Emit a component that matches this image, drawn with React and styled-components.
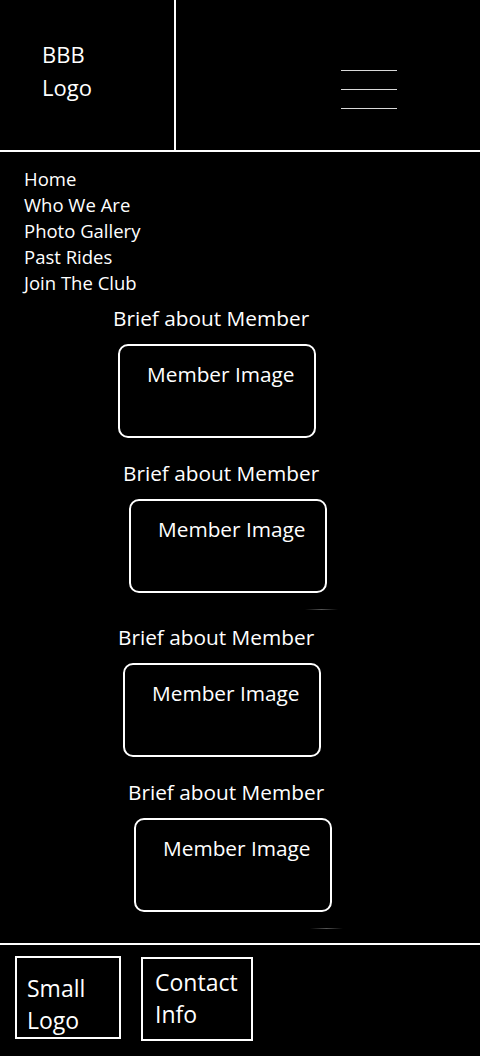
import React from 'react'
import styled, { createGlobalStyle } from 'styled-components'

const GlobalStyle = createGlobalStyle`
  html, body {
    margin: 0;
    padding: 0;
    background: #000;
  }
  body {
    color: #fff;
    font-family: "Open Sans", Lato, "Liberation Sans", sans-serif;
  }
`

const Page = styled.div`
  width: 480px;
  min-height: 1056px;
  background: #000;
  display: flex;
  flex-direction: column;
`

const Header = styled.header`
  display: flex;
  height: 150px;
  border-bottom: 2px solid #fff;
`

const LogoCell = styled.div`
  width: 176px;
  border-right: 2px solid #fff;
  padding: 38px 0 0 42px;
  box-sizing: border-box;
  font-size: 22px;
  line-height: 33px;
`

const MenuCell = styled.div`
  flex: 1;
  display: flex;
  justify-content: flex-end;
  padding: 70px 83px 0 0;
`

const Burger = styled.div`
  display: flex;
  flex-direction: column;
  gap: 18px;
`

const BurgerLine = styled.span`
  display: block;
  width: 56px;
  height: 1px;
  background: #d8d8d8;
`

const Nav = styled.nav`
  display: flex;
  flex-direction: column;
  padding: 14px 0 0 24px;
  font-size: 18.5px;
  line-height: 26px;
`

const NavLink = styled.a`
  color: #fff;
  text-decoration: none;
`

const Members = styled.section`
  display: flex;
  flex-direction: column;
  padding-top: 9px;
`

const Member = styled.div`
  display: flex;
  flex-direction: column;
  margin-left: ${(p) => p.$offset}px;
  margin-top: ${(p) => p.$top}px;
`

const Brief = styled.div`
  font-size: 20.8px;
  line-height: 26px;
`

const ImageBox = styled.div`
  position: relative;
  box-sizing: border-box;
  width: 198px;
  height: 94px;
  margin: 13px 0 0 ${(p) => p.$shift}px;
  border: 2px solid #fff;
  border-radius: 10px;
  padding: 15px 0 0 27px;
  font-size: 20.8px;
  line-height: 26px;

  ${(p) =>
    p.$trail &&
    `
    &::after {
      content: '';
      position: absolute;
      right: -13px;
      bottom: -19px;
      width: 33px;
      height: 1px;
      background: linear-gradient(90deg, #000, #555 50%, #000);
    }
  `}
`

const Footer = styled.footer`
  margin-top: 31px;
  border-top: 2px solid #fff;
  display: flex;
  align-items: flex-start;
  gap: 20px;
  padding: 11px 0 0 15px;
`

const FooterBox = styled.div`
  box-sizing: border-box;
  width: ${(p) => p.$w}px;
  height: ${(p) => p.$h}px;
  margin-top: ${(p) => p.$top || 0}px;
  border: 2px solid #fff;
  padding: ${(p) => p.$pad};
  font-size: 23px;
  line-height: 32px;
`

const members = [
  { offset: 113, top: 0, shift: 5 },
  { offset: 123, top: 22, shift: 6, trail: true },
  { offset: 118, top: 31, shift: 5 },
  { offset: 128, top: 22, shift: 6, trail: true },
]

const navItems = ['Home', 'Who We Are', 'Photo Gallery', 'Past Rides', 'Join The Club']

const App = () => {
  return (
    <Page>
      <GlobalStyle />
      <Header>
        <LogoCell>
          BBB
          <br />
          Logo
        </LogoCell>
        <MenuCell>
          <Burger>
            <BurgerLine />
            <BurgerLine />
            <BurgerLine />
          </Burger>
        </MenuCell>
      </Header>
      <Nav>
        {navItems.map((item) => (
          <NavLink key={item} href="#">
            {item}
          </NavLink>
        ))}
      </Nav>
      <Members>
        {members.map((m, i) => (
          <Member key={i} $offset={m.offset} $top={m.top}>
            <Brief>Brief about Member</Brief>
            <ImageBox $shift={m.shift} $trail={m.trail}>
              Member Image
            </ImageBox>
          </Member>
        ))}
      </Members>
      <Footer>
        <FooterBox $w={106} $h={83} $pad="14px 0 0 10px">
          Small
          <br />
          Logo
        </FooterBox>
        <FooterBox $w={112} $h={84} $top={1} $pad="7px 0 0 12px">
          Contact
          <br />
          Info
        </FooterBox>
      </Footer>
    </Page>
  )
}

export default App
